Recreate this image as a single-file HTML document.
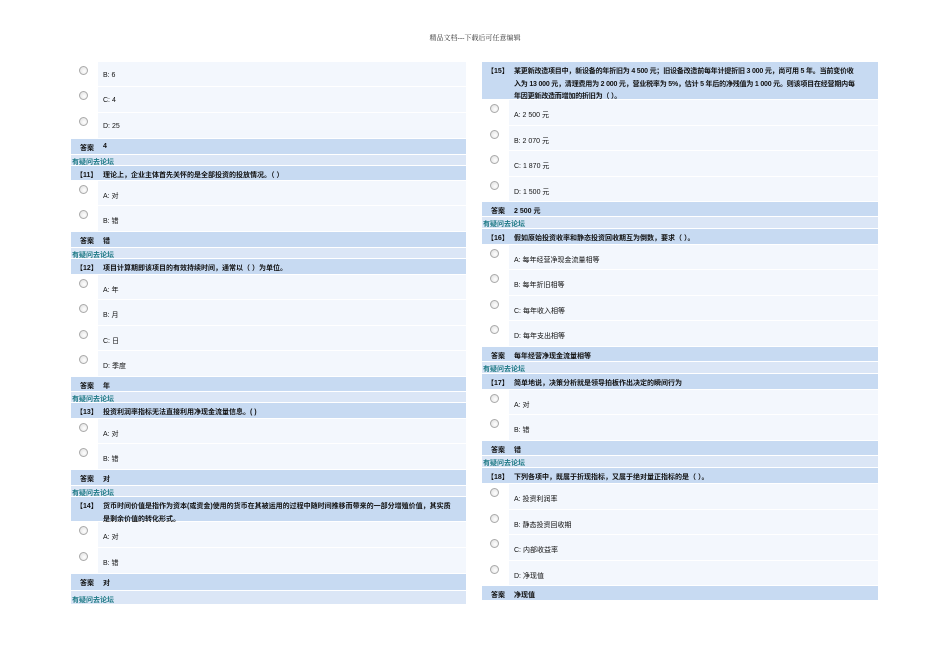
<!DOCTYPE html>
<html><head><meta charset="utf-8"><style>
body{margin:0;width:950px;height:672px;background:#fff;position:relative;overflow:hidden;font-family:"Liberation Sans","Noto Sans CJK SC",sans-serif;}
.hd{position:absolute;left:0;width:950px;top:33px;text-align:center;font:7px "Liberation Serif","Noto Serif CJK SC",serif;color:#333;}
.r{position:absolute;box-sizing:border-box;border-bottom:1px solid #fff;font-size:7px;color:#111;}
.L{left:71px;width:395px}.R{left:482px;width:396px}
.o{background:#f3f7fd}
.o .rc{position:absolute;left:0;top:0;width:27px;bottom:0;background:#fff}
.o .rd{position:absolute;left:8px;top:4px;width:7px;height:7px;border-radius:50%;border:1px solid #aaa;background:radial-gradient(circle at 60% 60%,#fff,#ddd)}
.o .t{position:absolute;left:32px;top:10px}
.q{background:#c7daf2;font-weight:bold}
.q .n{position:absolute;left:5px;top:4px}
.q .t{position:absolute;left:32px;top:4px;right:4px;line-height:12.5px}
.a{background:#c7daf2;font-weight:bold}
.a .n{position:absolute;left:9px;top:4px}
.a .t{position:absolute;left:32px;top:4px}
.l{background:#dbe6f6;color:#1f7a86;font-weight:bold}
.l span{position:absolute;left:1px;top:2px}
</style></head><body>
<div class="hd">精品文档---下载后可任意编辑</div>

<!-- LEFT -->
<div class="r L o" style="top:62px;height:25px"><div class="rc"><div class="rd"></div></div><span class="t">B: 6</span></div>
<div class="r L o" style="top:87px;height:26px"><div class="rc"><div class="rd"></div></div><span class="t">C: 4</span></div>
<div class="r L o" style="top:113px;height:26px"><div class="rc"><div class="rd"></div></div><span class="t">D: 25</span></div>
<div class="r L a" style="top:139px;height:16px"><span class="n">答案</span><span class="t">4</span></div>
<div class="r L l" style="top:155px;height:11px"><span>有疑问去论坛</span></div>
<div class="r L q" style="top:166px;height:15px"><span class="n">【11】</span><span class="t">理论上，企业主体首先关怀的是全部投资的投放情况。（ ）</span></div>
<div class="r L o" style="top:181px;height:25px"><div class="rc"><div class="rd"></div></div><span class="t">A: 对</span></div>
<div class="r L o" style="top:206px;height:26px"><div class="rc"><div class="rd"></div></div><span class="t">B: 错</span></div>
<div class="r L a" style="top:232px;height:16px"><span class="n">答案</span><span class="t">错</span></div>
<div class="r L l" style="top:248px;height:11px"><span>有疑问去论坛</span></div>
<div class="r L q" style="top:259px;height:16px"><span class="n">【12】</span><span class="t">项目计算期即该项目的有效持续时间，通常以（ ）为单位。</span></div>
<div class="r L o" style="top:275px;height:25px"><div class="rc"><div class="rd"></div></div><span class="t">A: 年</span></div>
<div class="r L o" style="top:300px;height:26px"><div class="rc"><div class="rd"></div></div><span class="t">B: 月</span></div>
<div class="r L o" style="top:326px;height:25px"><div class="rc"><div class="rd"></div></div><span class="t">C: 日</span></div>
<div class="r L o" style="top:351px;height:26px"><div class="rc"><div class="rd"></div></div><span class="t">D: 季度</span></div>
<div class="r L a" style="top:377px;height:15px"><span class="n">答案</span><span class="t">年</span></div>
<div class="r L l" style="top:392px;height:11px"><span>有疑问去论坛</span></div>
<div class="r L q" style="top:403px;height:16px"><span class="n">【13】</span><span class="t">投资利润率指标无法直接利用净现金流量信息。( )</span></div>
<div class="r L o" style="top:419px;height:25px"><div class="rc"><div class="rd"></div></div><span class="t">A: 对</span></div>
<div class="r L o" style="top:444px;height:26px"><div class="rc"><div class="rd"></div></div><span class="t">B: 错</span></div>
<div class="r L a" style="top:470px;height:16px"><span class="n">答案</span><span class="t">对</span></div>
<div class="r L l" style="top:486px;height:11px"><span>有疑问去论坛</span></div>
<div class="r L q" style="top:497px;height:25px"><span class="n">【14】</span><span class="t">货币时间价值是指作为资本(或资金)使用的货币在其被运用的过程中随时间推移而带来的一部分增殖价值，其实质<br>是剩余价值的转化形式。</span></div>
<div class="r L o" style="top:522px;height:26px"><div class="rc"><div class="rd"></div></div><span class="t">A: 对</span></div>
<div class="r L o" style="top:548px;height:26px"><div class="rc"><div class="rd"></div></div><span class="t">B: 错</span></div>
<div class="r L a" style="top:574px;height:17px"><span class="n">答案</span><span class="t">对</span></div>
<div class="r L l" style="top:591px;height:14px"><span style="top:4px">有疑问去论坛</span></div>

<!-- RIGHT -->
<div class="r R q" style="top:62px;height:38px"><span class="n">【15】</span><span class="t" style="letter-spacing:-0.2px;right:0">某更新改造项目中，新设备的年折旧为 4 500 元；旧设备改造前每年计提折旧 3 000 元，尚可用 5 年。当前变价收<br>入为 13 000 元，清理费用为 2 000 元，营业税率为 5%，估计 5 年后的净残值为 1 000 元。则该项目在经营期内每<br>年因更新改造而增加的折旧为（ ）。</span></div>
<div class="r R o" style="top:100px;height:26px"><div class="rc"><div class="rd"></div></div><span class="t">A: 2 500 元</span></div>
<div class="r R o" style="top:126px;height:25px"><div class="rc"><div class="rd"></div></div><span class="t">B: 2 070 元</span></div>
<div class="r R o" style="top:151px;height:26px"><div class="rc"><div class="rd"></div></div><span class="t">C: 1 870 元</span></div>
<div class="r R o" style="top:177px;height:25px"><div class="rc"><div class="rd"></div></div><span class="t">D: 1 500 元</span></div>
<div class="r R a" style="top:202px;height:15px"><span class="n">答案</span><span class="t">2 500 元</span></div>
<div class="r R l" style="top:217px;height:12px"><span>有疑问去论坛</span></div>
<div class="r R q" style="top:229px;height:16px"><span class="n">【16】</span><span class="t">假如原始投资收率和静态投资回收期互为倒数，要求（ ）。</span></div>
<div class="r R o" style="top:245px;height:25px"><div class="rc"><div class="rd"></div></div><span class="t">A: 每年经营净现金流量相等</span></div>
<div class="r R o" style="top:270px;height:26px"><div class="rc"><div class="rd"></div></div><span class="t">B: 每年折旧相等</span></div>
<div class="r R o" style="top:296px;height:25px"><div class="rc"><div class="rd"></div></div><span class="t">C: 每年收入相等</span></div>
<div class="r R o" style="top:321px;height:26px"><div class="rc"><div class="rd"></div></div><span class="t">D: 每年支出相等</span></div>
<div class="r R a" style="top:347px;height:15px"><span class="n">答案</span><span class="t">每年经营净现金流量相等</span></div>
<div class="r R l" style="top:362px;height:12px"><span>有疑问去论坛</span></div>
<div class="r R q" style="top:374px;height:16px"><span class="n">【17】</span><span class="t">简单地说，决策分析就是领导拍板作出决定的瞬间行为</span></div>
<div class="r R o" style="top:390px;height:25px"><div class="rc"><div class="rd"></div></div><span class="t">A: 对</span></div>
<div class="r R o" style="top:415px;height:26px"><div class="rc"><div class="rd"></div></div><span class="t">B: 错</span></div>
<div class="r R a" style="top:441px;height:15px"><span class="n">答案</span><span class="t">错</span></div>
<div class="r R l" style="top:456px;height:12px"><span>有疑问去论坛</span></div>
<div class="r R q" style="top:468px;height:16px"><span class="n">【18】</span><span class="t">下列各项中，既属于折现指标，又属于绝对量正指标的是（ ）。</span></div>
<div class="r R o" style="top:484px;height:26px"><div class="rc"><div class="rd"></div></div><span class="t">A: 投资利润率</span></div>
<div class="r R o" style="top:510px;height:25px"><div class="rc"><div class="rd"></div></div><span class="t">B: 静态投资回收期</span></div>
<div class="r R o" style="top:535px;height:26px"><div class="rc"><div class="rd"></div></div><span class="t">C: 内部收益率</span></div>
<div class="r R o" style="top:561px;height:25px"><div class="rc"><div class="rd"></div></div><span class="t">D: 净现值</span></div>
<div class="r R a" style="top:586px;height:15px"><span class="n">答案</span><span class="t">净现值</span></div>
</body></html>
